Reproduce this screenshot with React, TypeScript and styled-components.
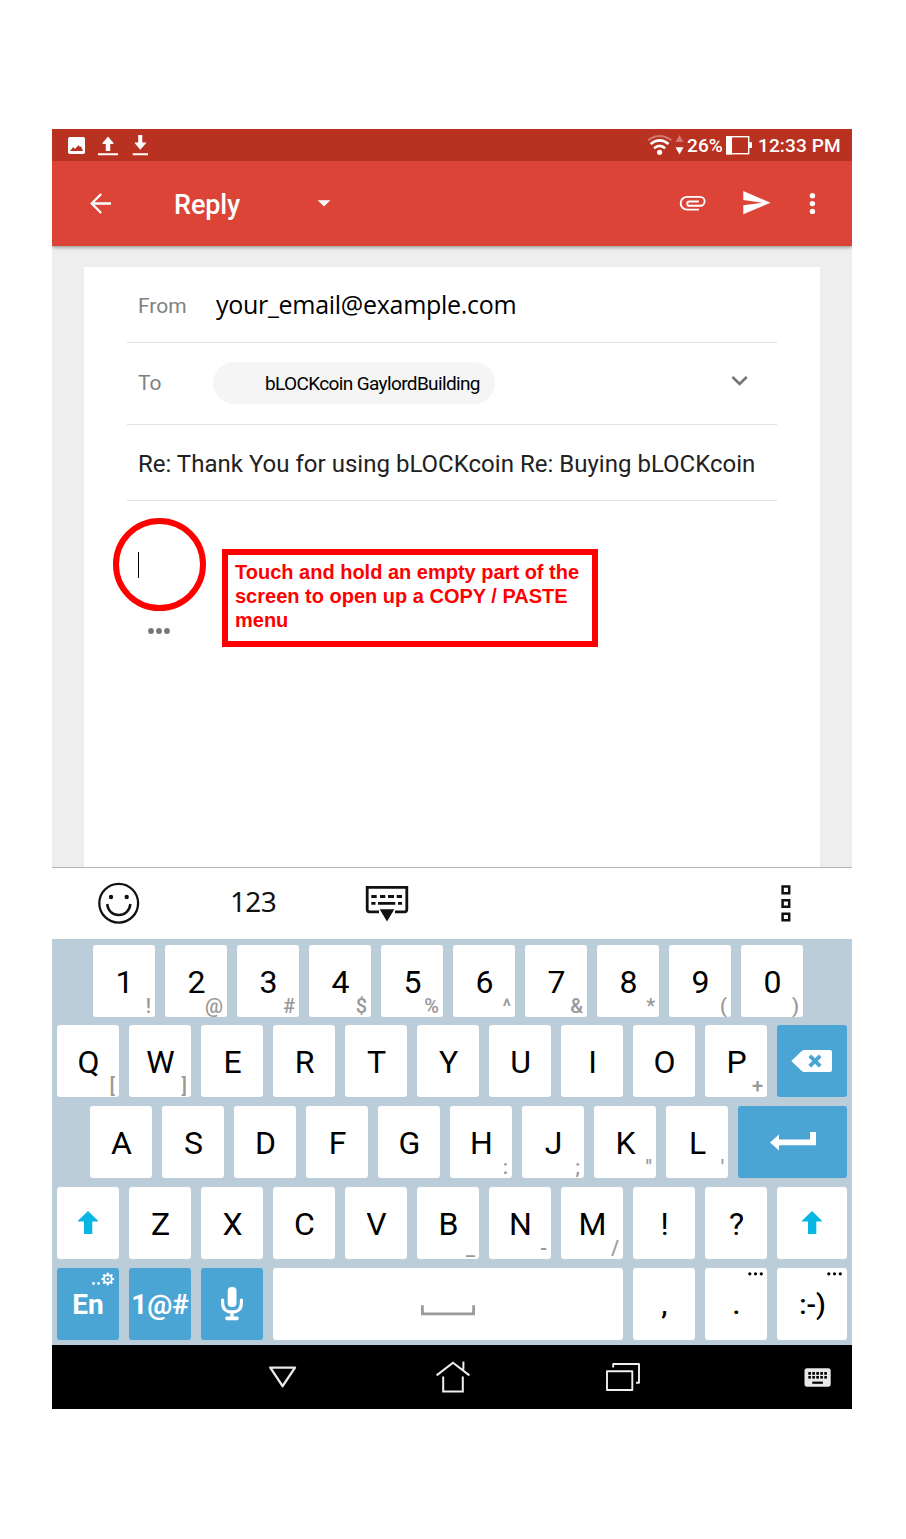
import React from "react";
import styled, { createGlobalStyle } from "styled-components";

const GlobalStyle = createGlobalStyle`
  *, *::before, *::after { box-sizing: border-box; }
  body { margin: 0; background: #fff; font-family: Roboto, "Liberation Sans", sans-serif; }
`;

const Page = styled.main`
  height: 1539px;
  padding: 129px 0 0 52px;
  background: #fff;
`;

const Device = styled.div`
  width: 800px;
  height: 1280px;
  display: flex;
  flex-direction: column;
`;

/* Every drawing shares one 906x1539 coordinate space; `box` selects its part. */
const Drawing = styled.svg<{ $gap: number }>`
  display: block;
  flex: none;
  margin-left: ${(p) => p.$gap}px;
`;

type IconProps = {
  box: [number, number, number, number];
  gap?: number;
  children: React.ReactNode;
};

const Icon = ({ box, gap = 0, children }: IconProps) => (
  <Drawing $gap={gap} width={box[2]} height={box[3]} viewBox={box.join(" ")} fill="none">
    {children}
  </Drawing>
);

const StatusBar = styled.div`
  height: 32px;
  flex: none;
  display: flex;
  justify-content: space-between;
  background: #b93221;
  color: #fff;
`;

const StatusGroup = styled.div`
  display: flex;
  align-items: center;
`;

const StatusText = styled.span<{ $width: number; $gap: number }>`
  width: ${(p) => p.$width}px;
  margin-left: ${(p) => p.$gap}px;
  padding-top: 1px;
  font-size: 19px;
  font-weight: 500;
  line-height: 30px;
  letter-spacing: 0.12px;
  white-space: nowrap;
`;

const AppBar = styled.header`
  position: relative;
  z-index: 1;
  height: 85px;
  flex: none;
  display: flex;
  align-items: center;
  background: #db4437;
  box-shadow: 0 1px 4px rgba(0, 0, 0, 0.45);
  clip-path: inset(0 0 -8px 0);
`;

const Title = styled.h1`
  width: 130px;
  margin: 0 0 0 56px;
  padding-top: 3px;
  color: #fff;
  font-size: 27px;
  font-weight: 500;
  line-height: 32px;
  letter-spacing: -0.1px;
`;

const Canvas = styled.div`
  height: 621px;
  flex: none;
  padding: 21px 32px 0;
  background: #eee;
`;

const Sheet = styled.section`
  height: 600px;
  padding: 0 43px;
  background: #fff;
`;

const Field = styled.div<{ $height: number; $lift?: number }>`
  height: ${(p) => p.$height}px;
  display: flex;
  align-items: center;
  padding-left: 11px;
  padding-bottom: ${(p) => p.$lift ?? 0}px;
  border-bottom: 1px solid #e0e0e0;
`;

const Label = styled.span<{ $width: number; $drop?: number }>`
  width: ${(p) => p.$width}px;
  flex: none;
  padding-top: ${(p) => p.$drop ?? 0}px;
  color: #808080;
  font-size: 21px;
  line-height: 26px;
`;

const Email = styled.span`
  margin-left: 1px;
  padding-bottom: 1px;
  color: #000;
  font-family: "Open Sans", "Noto Sans", sans-serif;
  font-size: 25px;
  line-height: 34px;
  letter-spacing: -0.29px;
`;

const Chip = styled.span`
  width: 282px;
  height: 42px;
  flex: none;
  padding: 1px 0 0 52px;
  border-radius: 21px;
  background: #f5f5f5;
  color: #000;
  font-size: 19px;
  line-height: 42px;
  letter-spacing: -0.63px;
  white-space: nowrap;
`;

const Subject = styled.span`
  padding-top: 2px;
  color: #212121;
  font-size: 24px;
  line-height: 30px;
  letter-spacing: 0.015px;
  white-space: nowrap;
`;

const Editor = styled.div`
  position: relative;
  padding: 51px 0 0 11px;
`;

const Caret = styled.div`
  width: 1px;
  height: 26px;
  margin-bottom: 49px;
  background: #000;
`;

const TouchRing = styled.div`
  position: absolute;
  left: -14px;
  top: 17px;
  width: 93px;
  height: 93px;
  border: 6px solid #f00;
  border-radius: 50%;
`;

const Callout = styled.p`
  position: absolute;
  left: 95px;
  top: 48px;
  width: 376px;
  height: 98px;
  margin: 0;
  padding: 5px 0 0 7px;
  border: 6px solid #f00;
  color: #f00;
  font: bold 20px/24px "Liberation Sans", Arial, sans-serif;
  white-space: nowrap;
`;

const Toolbar = styled.div`
  height: 72px;
  flex: none;
  display: flex;
  align-items: center;
  border-top: 1px solid #b5b5b5;
  background: #fff;
`;

const NumbersLabel = styled.span`
  width: 135px;
  margin-left: 89px;
  padding-bottom: 5px;
  color: #111;
  font: 28px/36px "Noto Sans", "Open Sans", sans-serif;
  letter-spacing: -0.7px;
`;

const Keyboard = styled.div`
  height: 406px;
  flex: none;
  padding-top: 6px;
  display: flex;
  flex-direction: column;
  gap: 9px;
  background: #bbcdd9;
`;

const KeyRow = styled.div<{ $indent: number; $tight?: boolean }>`
  height: 72px;
  display: flex;
  gap: 10px;
  padding-left: ${(p) => p.$indent}px;
  margin-bottom: ${(p) => (p.$tight ? -1 : 0)}px;
`;

const KeyCap = styled.div<{ $width?: number; $accent?: boolean; $strong?: boolean }>`
  position: relative;
  width: ${(p) => p.$width ?? 62}px;
  height: 72px;
  flex: none;
  display: flex;
  align-items: center;
  justify-content: center;
  padding: 2px 0 0 ${(p) => (p.$accent ? 0 : 1)}px;
  border-radius: 3px;
  background: ${(p) => (p.$accent ? "#4aa5d5" : "#fff")};
  color: ${(p) => (p.$accent ? "#fff" : "#000")};
  font-size: ${(p) => (p.$strong || p.$accent ? 28 : 32)}px;
  font-weight: ${(p) => (p.$accent ? 700 : p.$strong ? 500 : 400)};
  line-height: 36px;
  white-space: nowrap;
`;

const IconCap = styled(KeyCap)`
  padding: 0;
`;

const Hint = styled.span`
  position: absolute;
  right: 4px;
  bottom: -1px;
  color: #999;
  font-size: 20px;
  font-weight: 500;
  line-height: 24px;
`;

const Corner = styled.span<{ $top: number; $right: number }>`
  position: absolute;
  top: ${(p) => p.$top}px;
  right: ${(p) => p.$right}px;
`;

const NavBar = styled.nav`
  height: 64px;
  flex: none;
  display: flex;
  align-items: center;
  background: #000;
`;

const Keys = ({ keys }: { keys: string[] }) => (
  <>
    {keys.map((k) => (
      <KeyCap key={k}>
        {k[0]}
        {k[1] && <Hint>{k[1]}</Hint>}
      </KeyCap>
    ))}
  </>
);

const ShiftIcon = () => (
  <Icon box={[78, 1211, 20, 24]}>
    <path d="M88 1211L98 1220.7V1221.5H92.3V1234H84V1221.5H78V1220.7Z" fill="#08b6e4" />
  </Icon>
);

const MoreDots = () => (
  <Icon box={[748, 1272, 16, 4]}>
    <g fill="#000">
      <circle cx="749.8" cy="1273.8" r="1.6" />
      <circle cx="755.5" cy="1273.8" r="1.6" />
      <circle cx="761.3" cy="1273.8" r="1.6" />
    </g>
  </Icon>
);

const gearTeeth = [0, 45, 90, 135, 180, 225, 270, 315];
const navKeys = [809.5, 813.5, 817.5, 821.5, 825.5];

export default function App() {
  return (
    <Page>
      <GlobalStyle />
      <Device>
        <StatusBar>
          <StatusGroup>
            <Icon box={[68, 129, 17, 32]} gap={16}>
              <rect x="68" y="137" width="17" height="17" rx="1.8" fill="#fff" />
              <path d="M70 151L73.3 147L74.8 149L78.5 145.3L80 147L81 146.3L83 151Z" fill="#b93221" />
            </Icon>
            <Icon box={[98, 129, 20, 32]} gap={13}>
              <path d="M108 136.5L113.5 143V144H110.2V151H105.8V144H102.5V143ZM98 153.3H118V155.2H98Z" fill="#fff" />
            </Icon>
            <Icon box={[132, 129, 17, 32]} gap={14}>
              <path d="M138.2 135H142.3V142.5H146V143.3L140.3 149.8L134.8 143.3V142.5H138.2ZM132.7 153.3H148V155.2H132.7Z" fill="#fff" />
            </Icon>
          </StatusGroup>
          <StatusGroup>
            <Icon box={[646, 129, 27, 32]}>
              <circle cx="659.6" cy="152.3" r="2.6" fill="#fff" />
              <path d="M648 140.2Q659.6 131.8 671.4 140.2" stroke="#fff" strokeOpacity=".35" strokeWidth="2" />
              <path d="M650.6 144Q659.6 136.8 668.6 144M654 148.2Q659.6 143.6 665.2 148.2" stroke="#fff" strokeWidth="2.5" />
            </Icon>
            <Icon box={[675, 129, 9, 32]} gap={2}>
              <path d="M679.5 135L683.5 142H675.5Z" fill="#fff" fillOpacity=".35" />
              <path d="M675.5 147.3H683.5L679.5 154.5Z" fill="#fff" />
            </Icon>
            <StatusText $width={37} $gap={3}>26%</StatusText>
            <Icon box={[725, 129, 28, 32]} gap={1}>
              <rect x="726.7" y="136.7" width="22" height="17" stroke="#fff" strokeWidth="1.4" />
              <path d="M726 136H732V154.4H726ZM749 142.3H752V148H749Z" fill="#fff" />
            </Icon>
            <StatusText $width={94} $gap={5}>12:33 PM</StatusText>
          </StatusGroup>
        </StatusBar>

        <AppBar>
          <Icon box={[90, 161, 28, 85]} gap={38}>
            <path d="M111 203.5H92M101.2 194L91.7 203.5L101.2 213" stroke="#fff" strokeWidth="2.3" />
          </Icon>
          <Title>Reply</Title>
          <Icon box={[317, 161, 14, 85]} gap={13}>
            <path d="M317.7 200.3H330.3L324 206.6Z" fill="#fff" />
          </Icon>
          <Icon box={[679, 161, 28, 85]} gap={348}>
            <path
              d="M699 209.6H687A6.3 6.3 0 0 1 687 196.9H700.2A4.4 4.4 0 0 1 700.2 205.8H689.4A2.1 2.1 0 0 1 689.4 201.5H698.8"
              stroke="#fff"
              strokeWidth="1.9"
            />
          </Icon>
          <Icon box={[743, 161, 28, 85]} gap={36}>
            <path d="M743.3 214.3L770.5 202.7L743.3 191V200L762.5 202.7L743.3 205.3Z" fill="#fff" />
          </Icon>
          <Icon box={[809, 161, 7, 85]} gap={38}>
            <g fill="#fff">
              <circle cx="812.4" cy="195.8" r="2.7" />
              <circle cx="812.4" cy="203.6" r="2.7" />
              <circle cx="812.4" cy="211.4" r="2.7" />
            </g>
          </Icon>
        </AppBar>

        <Canvas>
          <Sheet>
            <Field $height={76}>
              <Label $width={77} $drop={3}>From</Label>
              <Email>your_email@example.com</Email>
            </Field>
            <Field $height={82} $lift={2}>
              <Label $width={75}>To</Label>
              <Chip>bLOCKcoin GaylordBuilding</Chip>
              <Icon box={[731, 374, 18, 18]} gap={236}>
                <path d="M732.5 377L739.6 384L746.7 377" stroke="#757575" strokeWidth="2.6" />
              </Icon>
            </Field>
            <Field $height={76}>
              <Subject>Re: Thank You for using bLOCKcoin Re: Buying bLOCKcoin</Subject>
            </Field>
            <Editor>
              <Caret />
              <Icon box={[147, 627, 24, 8]} gap={9}>
                <g fill="#777">
                  <circle cx="151" cy="631" r="2.9" />
                  <circle cx="159" cy="631" r="2.9" />
                  <circle cx="167" cy="631" r="2.9" />
                </g>
              </Icon>
              <TouchRing />
              <Callout>
                Touch and hold an empty part of the
                <br />
                screen to open up a COPY / PASTE
                <br />
                menu
              </Callout>
            </Editor>
          </Sheet>
        </Canvas>

        <Toolbar>
          <Icon box={[97, 868, 44, 71]} gap={45}>
            <circle cx="118.7" cy="903.2" r="19.4" stroke="#111" strokeWidth="2.3" />
            <circle cx="111" cy="897" r="2.2" fill="#111" />
            <circle cx="126.7" cy="897" r="2.2" fill="#111" />
            <path d="M107.2 904C108 911 112.6 915 118.7 915S129.6 911 130.4 904" stroke="#111" strokeWidth="2.5" />
          </Icon>
          <NumbersLabel>123</NumbersLabel>
          <Icon box={[365, 868, 44, 71]}>
            <path d="M379 911.8H369.5Q367.2 911.8 367.2 909.5V887.3H406.8V909.5Q406.8 911.8 404.5 911.8H395" stroke="#111" strokeWidth="2.8" />
            <path
              d="M371.3 896.5H376.7M380 896.5H385.3M388 896.5H394M396.7 896.5H402M371.3 903.3H375.5M378 903.3H395.3M398 903.3H402"
              stroke="#111"
              strokeWidth="2.8"
            />
            <path d="M379.7 909.2H394.3L387 921.5Z" fill="#111" />
          </Icon>
          <Icon box={[780, 868, 12, 71]} gap={371}>
            <path
              d="M782.6 886.6H789.2V893.2H782.6ZM782.6 900.2H789.2V906.8H782.6ZM782.6 913.7H789.2V920.3H782.6Z"
              stroke="#111"
              strokeWidth="2.5"
            />
          </Icon>
        </Toolbar>

        <Keyboard>
          <KeyRow $indent={41} $tight>
            <Keys keys={["1!", "2@", "3#", "4$", "5%", "6^", "7&", "8*", "9(", "0)"]} />
          </KeyRow>
          <KeyRow $indent={5}>
            <Keys keys={["Q[", "W]", "E", "R", "T", "Y", "U", "I", "O", "P+"]} />
            <IconCap $width={70} $accent>
              <Icon box={[791, 1049, 42, 24]}>
                <path d="M791.3 1061L801.5 1051.2Q802.7 1050 804.5 1050H830Q832 1050 832 1052V1070Q832 1072 830 1072H804.5Q802.7 1072 801.5 1070.8Z" fill="#fff" />
                <path d="M809.8 1055.8L820.2 1066.2M820.2 1055.8L809.8 1066.2" stroke="#4aa5d5" strokeWidth="3.8" />
              </Icon>
            </IconCap>
          </KeyRow>
          <KeyRow $indent={38}>
            <Keys keys={["A", "S", "D", "F", "G", "H:", "J;", 'K"', "L'"]} />
            <IconCap $width={109} $accent>
              <Icon box={[769, 1131, 48, 22]}>
                <path d="M770 1142.5L779 1134.5V1139.6H810V1132H816V1145.3H779V1150.5Z" fill="#fff" />
              </Icon>
            </IconCap>
          </KeyRow>
          <KeyRow $indent={5}>
            <IconCap>
              <ShiftIcon />
            </IconCap>
            <Keys keys={["Z", "X", "C", "V", "B_", "N-", "M/", "!", "?"]} />
            <IconCap $width={70}>
              <ShiftIcon />
            </IconCap>
          </KeyRow>
          <KeyRow $indent={5}>
            <KeyCap $accent>
              En
              <Corner $top={4} $right={4}>
                <Icon box={[91, 1272, 24, 14]}>
                  <circle cx="93.5" cy="1283.5" r="1.4" fill="#fff" />
                  <circle cx="98.6" cy="1283.5" r="1.4" fill="#fff" />
                  <circle cx="107.8" cy="1279" r="3.9" stroke="#fff" strokeWidth="1.8" />
                  <circle cx="107.8" cy="1279" r="1.2" fill="#fff" />
                  {gearTeeth.map((a) => (
                    <path key={a} d="M107.8 1272.7V1275" transform={`rotate(${a} 107.8 1279)`} stroke="#fff" strokeWidth="2.2" />
                  ))}
                </Icon>
              </Corner>
            </KeyCap>
            <KeyCap $accent>1@#</KeyCap>
            <IconCap $accent>
              <Icon box={[220, 1286, 24, 36]}>
                <rect x="227.7" y="1287" width="8.8" height="20" rx="4" fill="#fff" />
                <path d="M222.6 1300V1303C222.6 1309 226.5 1312.2 232 1312.2S241.4 1309 241.4 1303V1300" stroke="#fff" strokeWidth="3.2" strokeLinecap="round" />
                <path d="M232 1312V1318M227 1318.4H237" stroke="#fff" strokeWidth="3.6" strokeLinecap="round" />
              </Icon>
            </IconCap>
            <IconCap $width={350}>
              <Icon box={[421, 1292, 54, 24]}>
                <path d="M422.4 1305.3V1313.8H473.6V1305.3" stroke="#999" strokeWidth="2.8" />
              </Icon>
            </IconCap>
            <KeyCap $strong>,</KeyCap>
            <KeyCap $strong>
              .
              <Corner $top={4} $right={3}>
                <MoreDots />
              </Corner>
            </KeyCap>
            <KeyCap $width={70} $strong>
              :-)
              <Corner $top={4} $right={4}>
                <MoreDots />
              </Corner>
            </KeyCap>
          </KeyRow>
        </Keyboard>

        <NavBar>
          <Icon box={[268, 1345, 30, 64]} gap={216}>
            <path d="M270.3 1367.6H295L282.6 1386.2Z" stroke="#e8e8e8" strokeWidth="2.4" strokeLinejoin="round" />
          </Icon>
          <Icon box={[435, 1345, 36, 64]} gap={137}>
            <path d="M436.6 1375.4L453 1362.8L469.4 1375.4M463.4 1361.5V1369.5M443.2 1376.5V1391.6H462.8V1376.5" stroke="#f0f0f0" strokeWidth="2" />
          </Icon>
          <Icon box={[605, 1345, 36, 64]} gap={134}>
            <path d="M607 1371.2H632.3V1390H607ZM613.2 1367.5V1364H639V1382.8H636" stroke="#f0f0f0" strokeWidth="1.9" strokeLinejoin="round" />
          </Icon>
          <Icon box={[804, 1345, 28, 64]} gap={163}>
            <rect x="804.5" y="1368.3" width="26.2" height="18.4" rx="2.6" fill="#e8e8e8" />
            <g fill="#000">
              {navKeys.map((x) => (
                <React.Fragment key={x}>
                  <rect x={x - 1.2} y="1372" width="2.6" height="2.8" />
                  <rect x={x - 1.2} y="1376" width="2.6" height="2.6" />
                </React.Fragment>
              ))}
              <rect x="812.3" y="1381.6" width="10.6" height="2.2" />
            </g>
          </Icon>
        </NavBar>
      </Device>
    </Page>
  );
}
